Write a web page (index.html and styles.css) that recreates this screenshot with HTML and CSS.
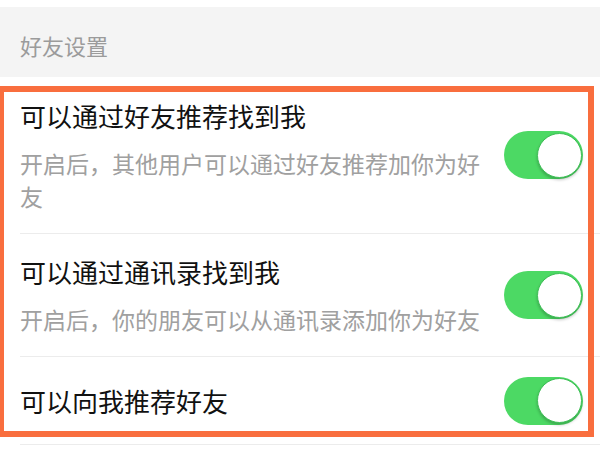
FILE: index.html
```html
<!DOCTYPE html>
<html lang="zh-CN">
<head>
<meta charset="utf-8">
<link rel="stylesheet" href="styles.css">
</head>
<body>
<div class="page">
  <div class="section-head">好友设置</div>
  <div class="list">
    <div class="row row-tall">
      <div class="text">
        <div class="title">可以通过好友推荐找到我</div>
        <div class="desc">开启后，其他用户可以通过好友推荐加你为好友</div>
      </div>
      <span class="switch"><span class="knob"></span></span>
    </div>
    <div class="row row-mid">
      <div class="text">
        <div class="title">可以通过通讯录找到我</div>
        <div class="desc">开启后，你的朋友可以从通讯录添加你为好友</div>
      </div>
      <span class="switch"><span class="knob"></span></span>
    </div>
    <div class="row row-short">
      <div class="text">
        <div class="title">可以向我推荐好友</div>
      </div>
      <span class="switch"><span class="knob"></span></span>
    </div>
  </div>
  <div class="highlight"></div>
</div>
</body>
</html>
```

FILE: styles.css
```css
html, body {
  margin: 0;
  padding: 0;
  background: #ffffff;
}
body {
  font-family: "Noto Sans CJK SC", "Noto Sans", sans-serif;
  width: 600px;
  height: 450px;
  overflow: hidden;
}
.page {
  position: relative;
  padding-top: 7px;
}
.section-head {
  height: 70px;
  background: #f4f4f4;
  color: #9b9b9b;
  font-size: 22px;
  line-height: 63px;
  padding-top: 7px;
  padding-left: 20px;
  box-sizing: border-box;
}
.list {
  display: flex;
  flex-direction: column;
}
.row {
  display: flex;
  align-items: center;
  margin-left: 20px;
  padding-right: 17px;
  border-bottom: 1px solid #ececec;
  box-sizing: border-box;
}
.row-tall { height: 157px; }
.row-mid { height: 123px; }
.row-short { height: 88px; }
.text {
  flex: 1;
  min-width: 0;
  display: flex;
  flex-direction: column;
  gap: 13px;
}
.title {
  font-size: 26px;
  line-height: 36px;
  color: #111111;
}
.desc {
  font-size: 23px;
  line-height: 33px;
  color: #a0a0a0;
}
.switch {
  flex: none;
  margin-left: 14px;
  width: 79px;
  height: 48px;
  border-radius: 24px;
  background: #4cd964;
  display: flex;
  align-items: center;
  justify-content: flex-end;
  padding: 0 1px;
  box-sizing: border-box;
}
.knob {
  width: 45px;
  height: 45px;
  border-radius: 50%;
  background: #ffffff;
  border: 1px solid #3fbf57;
  box-sizing: border-box;
  box-shadow: 0 2px 3px rgba(0, 0, 0, 0.22);
}
.highlight {
  position: absolute;
  left: -2px;
  top: 86px;
  width: 596px;
  height: 351px;
  border: 6px solid #f96e3e;
  box-sizing: border-box;
  pointer-events: none;
}
```
